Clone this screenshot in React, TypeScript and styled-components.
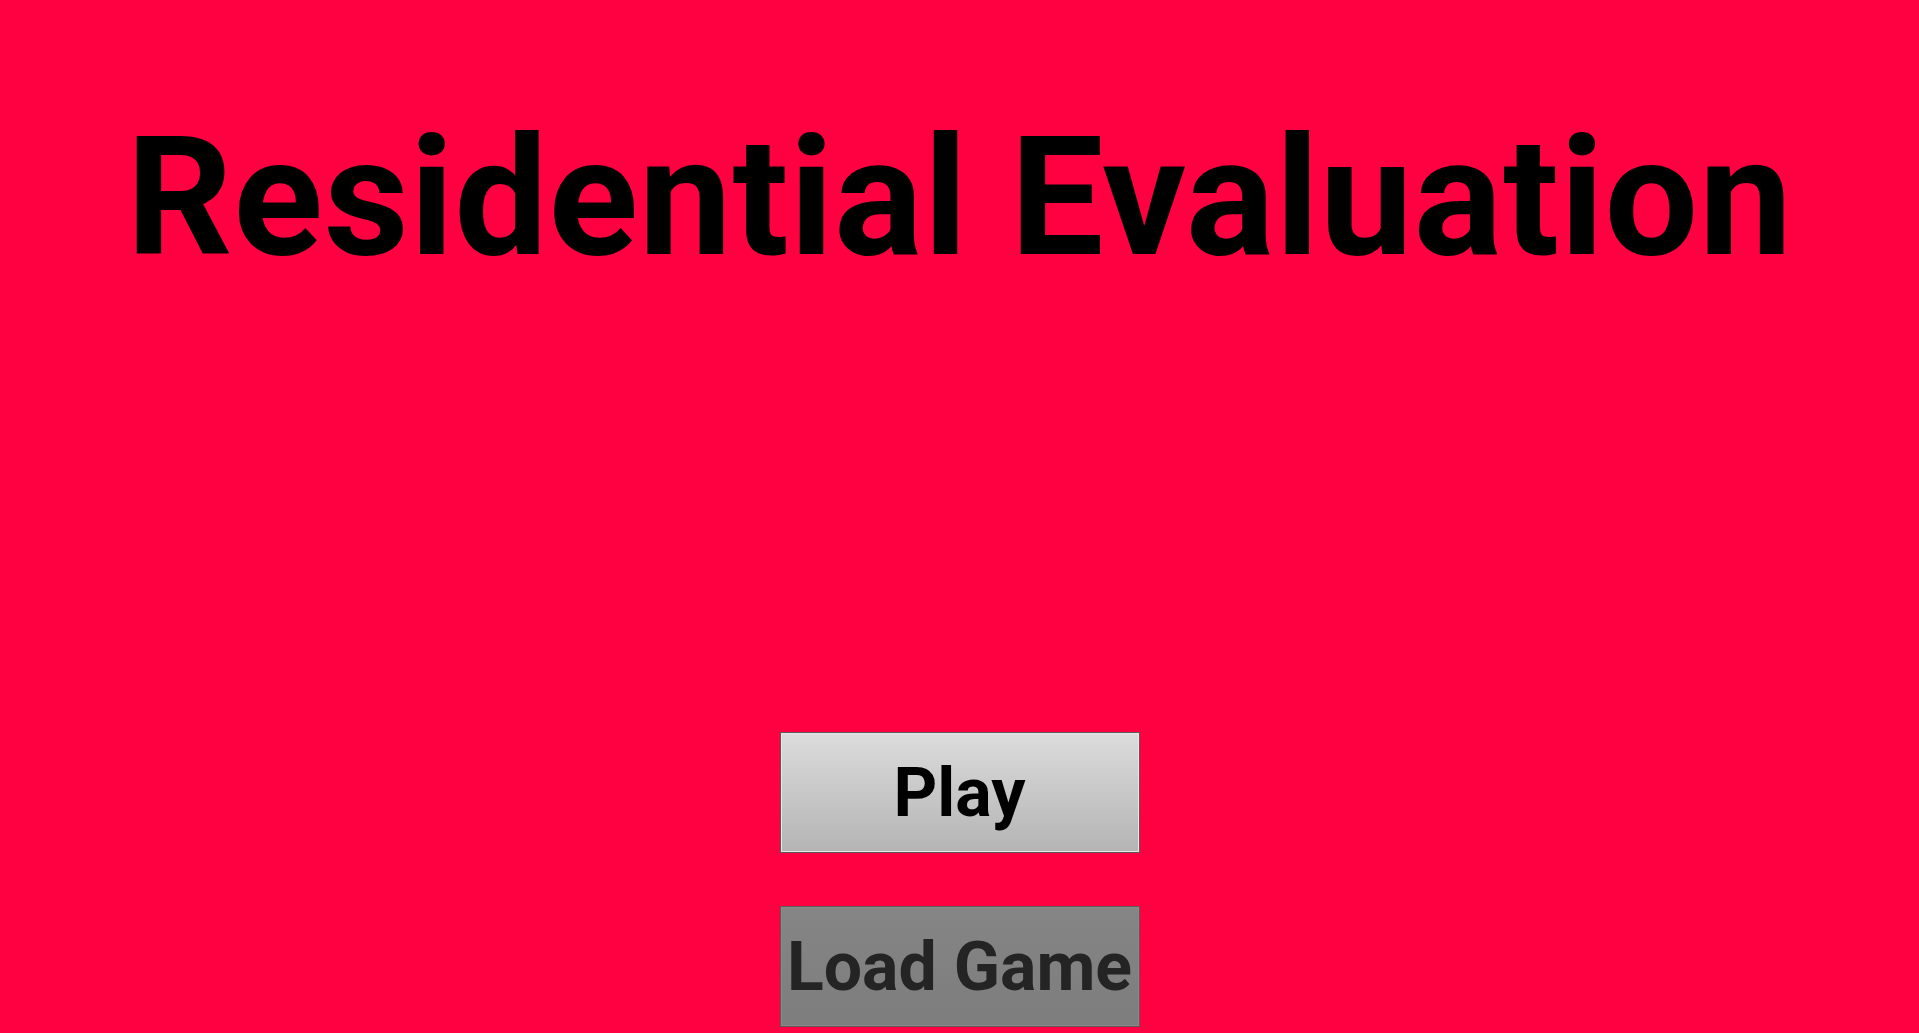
import React from 'react';
import styled, { createGlobalStyle } from 'styled-components';

const GlobalStyle = createGlobalStyle`
  html, body {
    margin: 0;
    padding: 0;
    height: 100%;
    background: #ff0040;
  }
  #root {
    height: 100%;
  }
`;

/** 整个菜单页 */
const Screen = styled.div`
  height: 100vh;
  display: flex;
  flex-direction: column;
  align-items: center;
  background: #ff0040;
  font-family: Roboto, 'Liberation Sans', sans-serif;
  overflow: hidden;
  box-sizing: border-box;
  padding: 115px 0 6px;
`;

const Title = styled.h1`
  margin: 0;
  font-size: 166px;
  font-weight: 700;
  line-height: 1;
  letter-spacing: 0.7px;
  color: #000;
  white-space: nowrap;
`;

const Spacer = styled.div`
  flex: 1;
`;

const ButtonStack = styled.div`
  display: flex;
  flex-direction: column;
  gap: 53px;
`;

const MenuButton = styled.button<{ $disabled?: boolean }>`
  width: 360px;
  height: 121px;
  padding: 0;
  display: flex;
  align-items: center;
  justify-content: center;
  border: 1px solid #5a5a5a;
  box-shadow: inset 0 0 0 1px ${(p) => (p.$disabled ? '#8a8a8a' : '#e6e6e6')};
  background: ${(p) =>
    p.$disabled
      ? 'linear-gradient(#858585, #7d7d7d)'
      : 'linear-gradient(#dcdcdc, #b4b4b4)'};
  color: ${(p) => (p.$disabled ? '#242424' : '#000')};
  font-family: Roboto, 'Liberation Sans', sans-serif;
  font-size: 68px;
  font-weight: 700;
  line-height: 1;
  white-space: nowrap;
  cursor: ${(p) => (p.$disabled ? 'default' : 'pointer')};
`;

const App = () => (
  <>
    <GlobalStyle />
    <Screen>
      <Title>Residential Evaluation</Title>
      <Spacer />
      <ButtonStack>
        <MenuButton>Play</MenuButton>
        <MenuButton $disabled>Load Game</MenuButton>
      </ButtonStack>
    </Screen>
  </>
);

export default App;
